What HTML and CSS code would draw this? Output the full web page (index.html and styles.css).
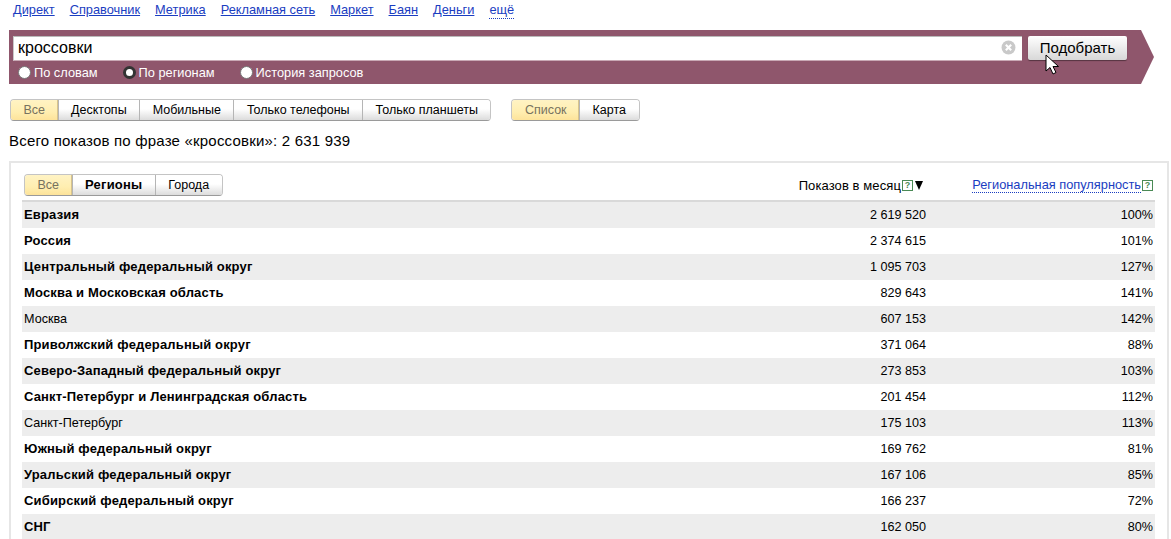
FILE: index.html
```html
<!DOCTYPE html>
<html lang="ru">
<head>
    <meta charset="UTF-8">
    <title>Подбор слов</title>
    <link rel="stylesheet" href="styles.css">
</head>
<body>
    <div class="services">
        <a href="#">Директ</a>
        <a href="#">Справочник</a>
        <a href="#">Метрика</a>
        <a href="#">Рекламная сеть</a>
        <a href="#">Маркет</a>
        <a href="#">Баян</a>
        <a href="#">Деньги</a>
        <a href="#" class="more">ещё</a>
    </div>

    <!-- полоса поиска -->
    <div class="search-band">
        <div class="search-left">
            <div class="search-input">
                <span>кроссовки</span>
                <svg class="clear" width="15" height="15" viewBox="0 0 14 14">
                    <circle cx="7" cy="7" r="6.5" fill="#c9c9c9"/>
                    <path d="M4.500 4.500l5 5M9.500 4.500l-5 5" stroke="#fff" stroke-width="2"/>
                </svg>
            </div>
            <div class="modes">
                <label class="mode mode-1"><i class="radio"></i>По словам</label>
                <label class="mode mode-2"><i class="radio on"></i>По регионам</label>
                <label class="mode"><i class="radio"></i>История запросов</label>
            </div>
        </div>
        <div class="search-btn">Подобрать</div>
        <svg class="cursor" width="16" height="22" viewBox="0 0 16 22">
            <path d="M1 1v16l4-3.500 3 6.500 3-1.500-3-6h5.500z" fill="#fff" stroke="#000" stroke-width="1"/>
        </svg>
    </div>

    <div class="filters">
        <div class="btn-group">
            <span class="btn active">Все</span><span class="btn">Десктопы</span><span class="btn">Мобильные</span><span class="btn">Только телефоны</span><span class="btn">Только планшеты</span>
        </div>
        <div class="btn-group">
            <span class="btn active">Список</span><span class="btn">Карта</span>
        </div>
    </div>

    <p class="total">Всего показов по фразе «кроссовки»: 2 631 939</p>

    <div class="result-box">
        <div class="result-head">
            <div class="btn-group">
                <span class="btn active">Все</span><span class="btn strong">Регионы</span><span class="btn">Города</span>
            </div>
            <div class="col-shows">Показов в месяц<i class="hint">?</i><i class="sort"></i></div>
            <div class="col-pop"><a href="#">Региональная популярность</a><i class="hint">?</i></div>
        </div>
        <div class="row b"><span class="name">Евразия</span><span class="num">2 619 520</span><span class="pct">100%</span></div>
        <div class="row b"><span class="name">Россия</span><span class="num">2 374 615</span><span class="pct">101%</span></div>
        <div class="row b"><span class="name">Центральный федеральный округ</span><span class="num">1 095 703</span><span class="pct">127%</span></div>
        <div class="row b"><span class="name">Москва и Московская область</span><span class="num">829 643</span><span class="pct">141%</span></div>
        <div class="row"><span class="name">Москва</span><span class="num">607 153</span><span class="pct">142%</span></div>
        <div class="row b"><span class="name">Приволжский федеральный округ</span><span class="num">371 064</span><span class="pct">88%</span></div>
        <div class="row b"><span class="name">Северо-Западный федеральный округ</span><span class="num">273 853</span><span class="pct">103%</span></div>
        <div class="row b"><span class="name">Санкт-Петербург и Ленинградская область</span><span class="num">201 454</span><span class="pct">112%</span></div>
        <div class="row"><span class="name">Санкт-Петербург</span><span class="num">175 103</span><span class="pct">113%</span></div>
        <div class="row b"><span class="name">Южный федеральный округ</span><span class="num">169 762</span><span class="pct">81%</span></div>
        <div class="row b"><span class="name">Уральский федеральный округ</span><span class="num">167 106</span><span class="pct">85%</span></div>
        <div class="row b"><span class="name">Сибирский федеральный округ</span><span class="num">166 237</span><span class="pct">72%</span></div>
        <div class="row b"><span class="name">СНГ</span><span class="num">162 050</span><span class="pct">80%</span></div>
    </div>
</body>
</html>
```

FILE: styles.css
```css
html {
    overflow: hidden;
    height: 100%;
}

body {
    margin: 0;
    padding: 0;
    height: 539px;
    overflow: hidden;
    font-family: "Liberation Sans", Arial, sans-serif;
    font-size: 13px;
    color: #000;
    background: #fff;
}

a {
    color: #1a3dc1;
}

/* ссылки сверху */
.services {
    display: flex;
    gap: 15px;
    height: 30px;
    padding: 2px 0 0 13px;
    box-sizing: border-box;
    font-size: 12.8px;
    line-height: 15px;
}

.more {
    text-decoration: none;
    border-bottom: 1px dotted #1a3dc1;
    height: 16px;
}

/* полоса поиска */
.search-band {
    position: relative;
    display: flex;
    align-items: flex-start;
    gap: 6px;
    width: 1145px;
    height: 54px;
    margin-left: 9px;
    padding: 6px 0 0 4px;
    box-sizing: border-box;
    background: #8f566c;
    clip-path: polygon(0 0, 1132px 0, 1145px 27px, 1132px 54px, 0 54px);
}

.search-left {
    width: 1009px;
}

.search-input {
    display: flex;
    align-items: center;
    justify-content: space-between;
    height: 25px;
    padding: 0 6px 2px 4px;
    box-sizing: border-box;
    background: #fff;
    border-top: 1px solid #b9b9b9;
    border-left: 1px solid #c9c9c9;
    border-bottom: 1px solid #c9a9b5;
    font-size: 16px;
}

.modes {
    display: flex;
    padding: 4px 0 0 5px;
    color: #fff;
    font-size: 12.8px;
    line-height: 15px;
}

.mode {
    display: flex;
    align-items: center;
    gap: 3px;
}

.mode-1 {
    margin-right: 25px;
}

.mode-2 {
    margin-right: 25px;
}

.radio {
    width: 13px;
    height: 13px;
    box-sizing: border-box;
    border-radius: 50%;
    background: #fff;
    border: 1px solid #777;
}

.radio.on {
    border: 3px solid #333;
}

.search-btn {
    width: 99px;
    height: 24px;
    box-sizing: border-box;
    border-radius: 2px;
    background: linear-gradient(#fff, #d8d8d8);
    box-shadow: 0 1px 1px rgba(0, 0, 0, 0.4);
    text-align: center;
    font-size: 15px;
    line-height: 24px;
}

.cursor {
    position: absolute;
    left: 1036px;
    top: 24px;
}

/* кнопки-переключатели */
.filters {
    display: flex;
    gap: 20px;
    padding: 15px 0 0 10px;
}

.btn-group {
    display: flex;
    height: 22px;
    box-sizing: border-box;
    border: 1px solid #c4c4c4;
    border-bottom-color: #9a9a9a;
    border-radius: 4px;
    font-size: 12.5px;
    line-height: 20px;
}

.btn {
    padding: 0 12.5px;
    background: linear-gradient(#fff, #fff 45%, #dcdcdc);
    border-left: 1px solid #b5b5b5;
}

.btn:first-child {
    border-left: none;
    border-radius: 3px 0 0 3px;
}

.btn:last-child {
    border-radius: 0 3px 3px 0;
}

.btn.active {
    color: #77725f;
    background: linear-gradient(#fff3c4, #ffeeb0 60%, #fde39a);
    box-shadow: inset -1px 0 0 #d8c48c;
}

.btn.strong {
    font-weight: bold;
    font-size: 13px;
    letter-spacing: 0.2px;
}

.total {
    margin: 0;
    padding: 12px 0 0 9px;
    font-size: 15px;
    letter-spacing: 0.2px;
    line-height: 16px;
}

/* таблица */
.result-box {
    margin: 12px 0 0 9px;
    width: 1160px;
    box-sizing: border-box;
    padding: 0 12px 0 11px;
    border: 2px solid #e6e6e6;
    border-bottom: none;
}

.result-head {
    display: flex;
    align-items: center;
    height: 39px;
    padding: 11px 0 4px 2px;
    box-sizing: border-box;
    border-bottom: 2px solid #d9d9d9;
    font-size: 13px;
    letter-spacing: 0.1px;
}

.result-head .btn-group {
    letter-spacing: 0;
    font-size: 12.5px;
}

.col-shows {
    display: flex;
    align-items: center;
    justify-content: flex-end;
    margin-left: auto;
    width: 250px;
    padding-right: 3px;
    box-sizing: border-box;
}

.col-pop {
    display: flex;
    align-items: center;
    justify-content: flex-end;
    width: 229px;
    padding-right: 2px;
    box-sizing: border-box;
    letter-spacing: 0;
    font-size: 12.8px;
}

.col-pop a {
    text-decoration: none;
    border-bottom: 1px dotted #1a3dc1;
}

.hint {
    width: 11px;
    height: 11px;
    box-sizing: border-box;
    border: 1px solid #4a8a55;
    margin-left: 1px;
    color: #4a8a55;
    font-size: 9px;
    font-style: normal;
    font-weight: bold;
    line-height: 9px;
    text-align: center;
}

.sort {
    width: 0;
    height: 0;
    margin-left: 2px;
    border-left: 4.5px solid transparent;
    border-right: 4.5px solid transparent;
    border-top: 9px solid #000;
}

.row {
    display: flex;
    height: 26px;
    align-items: center;
    padding: 0 2px 1px;
    box-sizing: border-box;
    font-size: 12.6px;
}

.row:nth-child(even) {
    background: #ededed;
}

.row.b .name {
    font-weight: bold;
    font-size: 13px;
    letter-spacing: 0.16px;
}

.name {
    flex: 1;
}

.num {
    width: 100px;
    text-align: right;
}

.pct {
    width: 227px;
    text-align: right;
}
```
